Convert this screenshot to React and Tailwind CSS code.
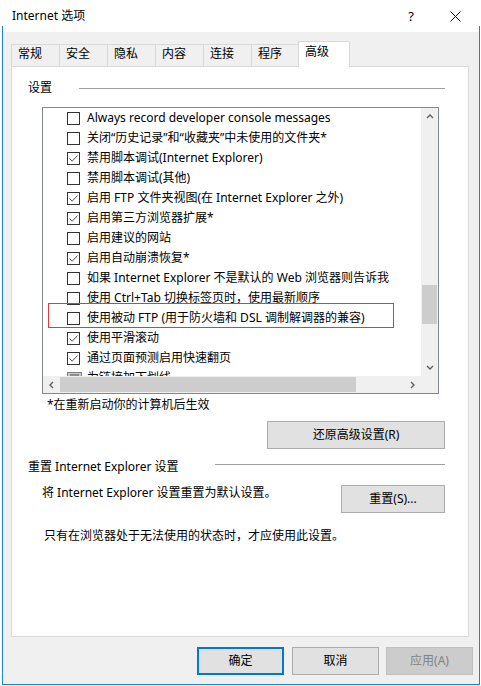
import React from "react";

const items = [
  { label: "Always record developer console messages", checked: false },
  { label: "关闭“历史记录”和“收藏夹”中未使用的文件夹*", checked: false },
  { label: "禁用脚本调试(Internet Explorer)", checked: true },
  { label: "禁用脚本调试(其他)", checked: false },
  { label: "启用 FTP 文件夹视图(在 Internet Explorer 之外)", checked: true },
  { label: "启用第三方浏览器扩展*", checked: true },
  { label: "启用建议的网站", checked: false },
  { label: "启用自动崩溃恢复*", checked: true },
  { label: "如果 Internet Explorer 不是默认的 Web 浏览器则告诉我", checked: false },
  { label: "使用 Ctrl+Tab 切换标签页时，使用最新顺序", checked: false },
  { label: "使用被动 FTP (用于防火墙和 DSL 调制解调器的兼容)", checked: false },
  { label: "使用平滑滚动", checked: true },
  { label: "通过页面预测启用快速翻页", checked: true },
];

const tabs = ["常规", "安全", "隐私", "内容", "连接"];

function Check({ checked }) {
  return (
    <span className="w-[13px] h-[13px] border border-[#333333] bg-white flex-none flex items-center justify-center">
      {checked && (
        <svg width="11" height="11" viewBox="0 0 11 11">
          <path d="M1.5 5.5 L4.2 8.2 L9.5 2.5" fill="none" stroke="#505050" strokeWidth="1" />
        </svg>
      )}
    </span>
  );
}

function Chevron({ dir }) {
  const paths = {
    up: "M1 5 L4 2 L7 5",
    down: "M1 2 L4 5 L7 2",
    left: "M5 1 L2 4 L5 7",
    right: "M2 1 L5 4 L2 7",
  };
  const vertical = dir === "up" || dir === "down";
  return (
    <svg width={vertical ? 8 : 7} height={vertical ? 7 : 8} viewBox={vertical ? "0 0 8 7" : "0 0 7 8"}>
      <path d={paths[dir]} fill="none" stroke="#606060" strokeWidth="1.4" />
    </svg>
  );
}

export default function App() {
  return (
    <div className="relative w-[481px] h-[686px] bg-white flex flex-col text-[12px] text-black font-['Noto_Sans','Noto_Sans_CJK_SC',sans-serif]">
      {/* title bar */}
      <div className="h-[26px] flex items-start">
        <span className="ml-[12px] mt-[8px] leading-[16px]">Internet 选项</span>
        <span className="ml-auto mt-[8px] leading-[16px] text-[13px]">?</span>
        <svg className="ml-[36px] mr-[20px] mt-[11px]" width="11" height="11" viewBox="0 0 11 11">
          <path d="M0.5 0.5 L10.5 10.5 M10.5 0.5 L0.5 10.5" stroke="#111" strokeWidth="1" />
        </svg>
      </div>

      <div className="flex-1 ml-[2px] mr-[1px] mb-[1px] border-x border-b border-[#1883d7] flex flex-col">
        <div className="h-[6px] bg-white" />
        <div className="flex-1 bg-[#f0f0f0] pl-[8px] pt-[9px] flex flex-col">
          {/* tabs */}
          <div className="flex items-end h-[25px]">
            {tabs.map((t) => (
              <div key={t} className="w-[48px] h-[22px] border-l border-t border-[#d9d9d9] pl-[6px] leading-[18px]">
                {t}
              </div>
            ))}
            <div className="w-[47px] h-[22px] border-l border-t border-[#d9d9d9] pl-[6px] leading-[18px]">程序</div>
            <div className="relative z-10 w-[52px] h-[26px] -mb-px border border-b-0 border-[#d9d9d9] bg-white pl-[6px] pt-[1px] leading-[18px]">
              高级
            </div>
          </div>

          {/* panel */}
          <div className="w-[458px] h-[571px] border border-[#d9d9d9] bg-white flex flex-col">
            <div className="mt-[14px] h-[14px] flex items-center">
              <span className="pl-[16px] leading-[14px]">设置</span>
              <div className="flex-1 h-px bg-[#a0a0a0] ml-[27px] mr-[23px]" />
            </div>

            {/* listbox */}
            <div className="mt-[12px] ml-[30px] w-[397px] h-[287px] border border-[#828790] flex flex-col">
              <div className="flex-1 flex min-h-0">
                <div className="flex-1 overflow-hidden">
                  {items.map((it) => (
                    <div key={it.label} className="h-[20px] flex items-start pl-[24px] whitespace-nowrap">
                      <span className="pt-[4px]">
                        <Check checked={it.checked} />
                      </span>
                      <span className="ml-[7px] leading-[20px]">{it.label}</span>
                    </div>
                  ))}
                  <div className="h-[20px] flex items-start pl-[24px] whitespace-nowrap">
                    <svg className="mt-[4px]" width="15" height="13" viewBox="0 0 15 13">
                      <rect x="0.5" y="0.5" width="14" height="12" fill="#c8c8c8" stroke="#808080" />
                      <path d="M3 3 H12 M3 6 H12 M3 9 H9" stroke="#555" strokeWidth="1" />
                    </svg>
                    <span className="ml-[5px] leading-[20px]">为链接加下划线</span>
                  </div>
                </div>
                <div className="w-[17px] bg-[#f0f0f0] flex flex-col">
                  <div className="h-[17px] flex items-center justify-center">
                    <Chevron dir="up" />
                  </div>
                  <div className="flex-1">
                    <div className="mt-[160px] mx-[1px] h-[39px] bg-[#cdcdcd]" />
                  </div>
                  <div className="h-[17px] flex items-center justify-center">
                    <Chevron dir="down" />
                  </div>
                </div>
              </div>
              <div className="h-[17px] flex bg-[#f0f0f0]">
                <div className="w-[17px] flex items-center justify-center">
                  <Chevron dir="left" />
                </div>
                <div className="flex-1 flex items-center">
                  <div className="w-[296px] h-[15px] bg-[#cdcdcd]" />
                </div>
                <div className="w-[17px] flex items-center justify-center">
                  <Chevron dir="right" />
                </div>
                <div className="w-[17px]" />
              </div>
            </div>

            <div className="mt-[3px] pl-[35px] leading-[16px]">*在重新启动你的计算机后生效</div>

            <button className="self-end mr-[23px] mt-[8px] w-[178px] h-[28px] border border-[#adadad] bg-[#e1e1e1] leading-[16px]">
              还原高级设置(R)
            </button>

            <div className="mt-[11px] h-[14px] flex items-start">
              <span className="pl-[16px] leading-[14px]">重置 Internet Explorer 设置</span>
              <div className="ml-auto mr-[23px] mt-[4px] w-[230px] h-px bg-[#a0a0a0]" />
            </div>

            <div className="mt-[11px] flex items-start">
              <span className="pl-[30px] leading-[16px]">将 Internet Explorer 设置重置为默认设置。</span>
              <button className="ml-auto mr-[23px] w-[104px] h-[28px] border border-[#adadad] bg-[#e1e1e1] leading-[16px]">
                重置(S)...
              </button>
            </div>

            <div className="mt-[15px] pl-[32px] leading-[16px]">只有在浏览器处于无法使用的状态时，才应使用此设置。</div>
          </div>

          {/* dialog buttons */}
          <div className="flex justify-end pr-[6px] mt-[10px]">
            <button className="w-[87px] h-[28px] border-2 border-[#0078d7] bg-[#e1e1e1] mr-[8px]">确定</button>
            <button className="w-[87px] h-[28px] border border-[#adadad] bg-[#e1e1e1] mr-[7px]">取消</button>
            <button className="w-[87px] h-[28px] border border-[#bfbfbf] bg-[#cccccc] text-[#838383]">应用(A)</button>
          </div>
        </div>
      </div>

      {/* red annotation box */}
      <div className="absolute left-[48px] top-[303px] w-[346px] h-[25px] border border-[#e53935]" />
    </div>
  );
}
